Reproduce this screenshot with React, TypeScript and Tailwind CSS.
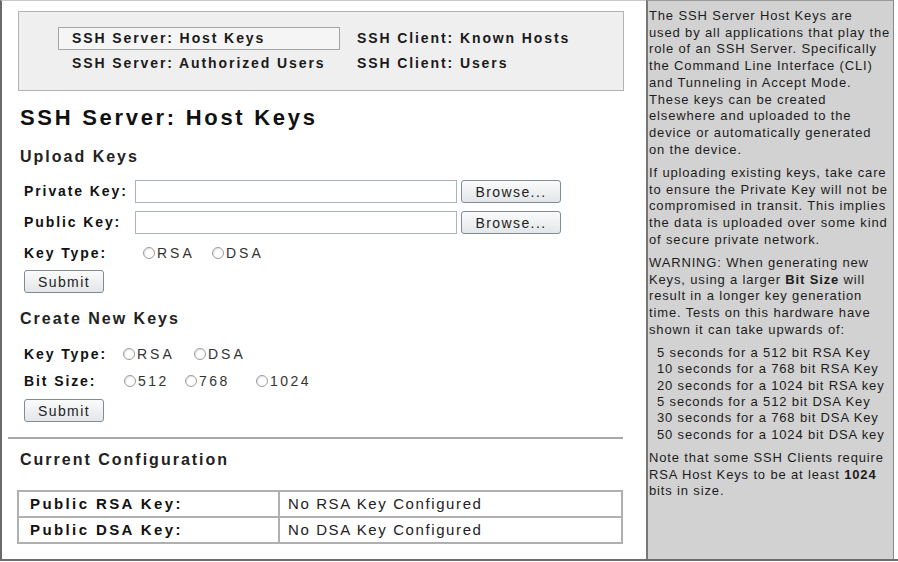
import React from 'react';

const Radio: React.FC<{ label: string; className?: string }> = ({ label, className = '' }) => (
  <span className={`inline-flex items-center ${className}`}>
    <span className="w-[12px] h-[12px] shrink-0 rounded-full border border-[#9c9c9c] bg-white shadow-[inset_1px_1px_1px_rgba(0,0,0,0.12)]" />
    <span className="ml-[2px]">{label}</span>
  </span>
);

const Btn: React.FC<{ children: React.ReactNode; w: string }> = ({ children, w }) => (
  <button className={`${w} h-[23px] rounded-[3px] border border-[#7f8c96] bg-gradient-to-b from-[#fbfbfb] to-[#e3e6e8] text-[14px] tracking-[1.4px] text-[#222] leading-none`}>
    {children}
  </button>
);

const App: React.FC = () => {
  return (
    <div className="w-[898px] h-[562px] bg-white font-[family-name:Liberation_Sans,Arial,sans-serif] text-[#111] overflow-hidden">
      <div className="flex h-[561px] border-b-2 border-[#6e6e6e]">
        {/* Main column */}
        <div className="w-[646px] border-l-2 border-t border-l-[#6a6a6a] border-t-[#c8c8c8] pl-[16px]">
          {/* Nav */}
          <div className="mt-[10px] w-[606px] h-[80px] bg-[#efefef] border border-[#b3b3b3] pt-[15px] pl-[39px]">
            <div className="grid grid-cols-[282px_auto] gap-x-[17px] text-[14px] font-bold tracking-[1.9px] text-[#1a1a1a]">
              <div className="h-[23px] border border-[#a6a6a6] bg-[#f5f5f5] pl-[13px] flex items-center">SSH Server: Host Keys</div>
              <div className="h-[23px] flex items-center">SSH Client: Known Hosts</div>
              <div className="h-[26px] pl-[14px] flex items-center">SSH Server: Authorized Users</div>
              <div className="h-[26px] flex items-center">SSH Client: Users</div>
            </div>
          </div>

          <h1 className="mt-[14px] ml-[2px] text-[22px] leading-[26px] font-bold tracking-[2.7px]">SSH Server: Host Keys</h1>

          <h2 className="mt-[16px] ml-[2px] text-[16px] leading-[20px] font-bold tracking-[2px] text-[#222]">Upload Keys</h2>

          <div className="ml-[6px] text-[14px]">
            <div className="mt-[13px] flex items-center h-[23px]">
              <span className="w-[111px] font-bold tracking-[1.9px]">Private Key:</span>
              <div className="w-[322px] h-[23px] border border-[#a9b6bf] bg-white" />
              <div className="ml-[4px]"><Btn w="w-[100px]">Browse...</Btn></div>
            </div>
            <div className="mt-[8px] flex items-center h-[23px]">
              <span className="w-[111px] font-bold tracking-[1.9px]">Public Key:</span>
              <div className="w-[322px] h-[23px] border border-[#a9b6bf] bg-white" />
              <div className="ml-[4px]"><Btn w="w-[100px]">Browse...</Btn></div>
            </div>
            <div className="mt-[8px] flex items-center h-[22px]">
              <span className="w-[119px] font-bold tracking-[1.9px]">Key Type:</span>
              <div className="flex items-center text-[#333] tracking-[3px]">
                <Radio label="RSA" className="w-[69px]" />
                <Radio label="DSA" />
              </div>
            </div>
            <div className="mt-[6px]"><Btn w="w-[80px]">Submit</Btn></div>
          </div>

          <h2 className="mt-[16px] ml-[2px] text-[16px] leading-[20px] font-bold tracking-[2px] text-[#222]">Create New Keys</h2>

          <div className="ml-[6px] text-[14px]">
            <div className="mt-[14px] flex items-center h-[22px]">
              <span className="w-[99px] font-bold tracking-[1.9px]">Key Type:</span>
              <div className="flex items-center text-[#333] tracking-[3px]">
                <Radio label="RSA" className="w-[71px]" />
                <Radio label="DSA" />
              </div>
            </div>
            <div className="mt-[5px] flex items-center h-[22px]">
              <span className="w-[100px] font-bold tracking-[1.9px]">Bit Size:</span>
              <div className="flex items-center text-[#333] tracking-[2.5px]">
                <Radio label="512" className="w-[61px]" />
                <Radio label="768" className="w-[71px]" />
                <Radio label="1024" />
              </div>
            </div>
            <div className="mt-[7px]"><Btn w="w-[80px]">Submit</Btn></div>
          </div>

          <hr className="mt-[15px] -ml-[10px] w-[615px] border-0 border-t-2 border-[#a8a8a8]" />

          <h2 className="mt-[11px] ml-[2px] text-[16px] leading-[20px] font-bold tracking-[2px] text-[#222]">Current Configuration</h2>

          <table className="mt-[20px] -ml-[1px] w-[606px] border-2 border-[#b0b0b0] border-collapse text-[15px]">
            <tbody>
              <tr className="h-[26px]">
                <td className="w-[261px] border-2 border-[#b0b0b0] pl-[11px] font-bold tracking-[2.4px]">Public RSA Key:</td>
                <td className="border-2 border-[#b0b0b0] pl-[8px] tracking-[1.6px] text-[#222]">No RSA Key Configured</td>
              </tr>
              <tr className="h-[26px]">
                <td className="border-2 border-[#b0b0b0] pl-[11px] font-bold tracking-[2.4px]">Public DSA Key:</td>
                <td className="border-2 border-[#b0b0b0] pl-[8px] tracking-[1.6px] text-[#222]">No DSA Key Configured</td>
              </tr>
            </tbody>
          </table>
        </div>

        {/* Help panel */}
        <div className="w-[248px] bg-[#d2d2d2] border-l-2 border-r border-t border-l-[#777] border-r-[#888] border-t-[#999] pl-[1px] pt-[7px] text-[13px] leading-[16.7px] tracking-[0.85px] text-[#1c1c1c] whitespace-nowrap overflow-hidden">
          <p className="mb-[6.5px]">
            The SSH Server Host Keys are<br />
            used by all applications that play the<br />
            role of an SSH Server. Specifically<br />
            the Command Line Interface (CLI)<br />
            and Tunneling in Accept Mode.<br />
            These keys can be created<br />
            elsewhere and uploaded to the<br />
            device or automatically generated<br />
            on the device.
          </p>
          <p className="mb-[6.5px]">
            If uploading existing keys, take care<br />
            to ensure the Private Key will not be<br />
            compromised in transit. This implies<br />
            the data is uploaded over some kind<br />
            of secure private network.
          </p>
          <p className="mb-[6.5px]">
            WARNING: When generating new<br />
            Keys, using a larger <b>Bit Size</b> will<br />
            result in a longer key generation<br />
            time. Tests on this hardware have<br />
            shown it can take upwards of:
          </p>
          <p className="mb-[6.5px] pl-[8px] leading-[16.4px]">
            5 seconds for a 512 bit RSA Key<br />
            10 seconds for a 768 bit RSA Key<br />
            20 seconds for a 1024 bit RSA key<br />
            5 seconds for a 512 bit DSA Key<br />
            30 seconds for a 768 bit DSA Key<br />
            50 seconds for a 1024 bit DSA key
          </p>
          <p>
            Note that some SSH Clients require<br />
            RSA Host Keys to be at least <b>1024</b><br />
            bits in size.
          </p>
        </div>
      </div>
    </div>
  );
};

export default App;
